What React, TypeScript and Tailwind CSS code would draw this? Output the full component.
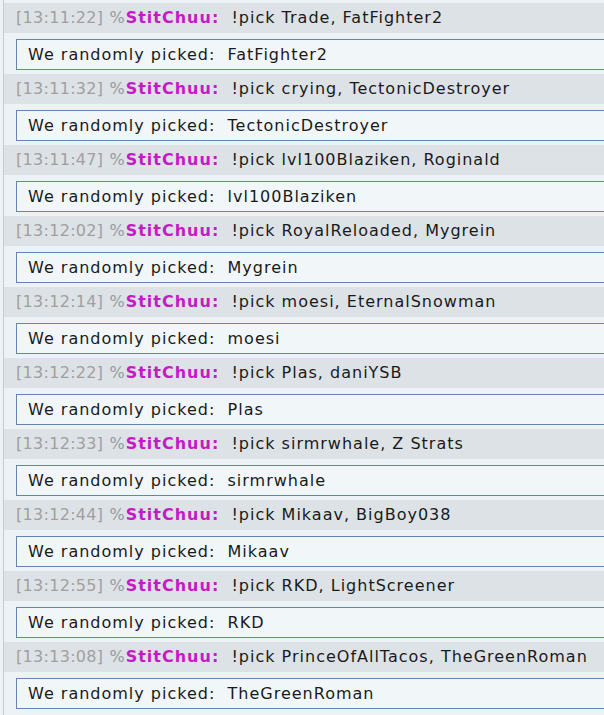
import React from "react";

const picks = [
  { time: "13:11:22", msg: "!pick Trade, FatFighter2", result: "FatFighter2" },
  { time: "13:11:32", msg: "!pick crying, TectonicDestroyer", result: "TectonicDestroyer" },
  { time: "13:11:47", msg: "!pick lvl100Blaziken, Roginald", result: "lvl100Blaziken" },
  { time: "13:12:02", msg: "!pick RoyalReloaded, Mygrein", result: "Mygrein" },
  { time: "13:12:14", msg: "!pick moesi, EternalSnowman", result: "moesi" },
  { time: "13:12:22", msg: "!pick Plas, daniYSB", result: "Plas" },
  { time: "13:12:33", msg: "!pick sirmrwhale, Z Strats", result: "sirmrwhale" },
  { time: "13:12:44", msg: "!pick Mikaav, BigBoy038", result: "Mikaav" },
  { time: "13:12:55", msg: "!pick RKD, LightScreener", result: "RKD" },
  { time: "13:13:08", msg: "!pick PrinceOfAllTacos, TheGreenRoman", result: "TheGreenRoman" },
];

export default function App() {
  return (
    <div className="w-[604px] h-[715px] overflow-hidden flex bg-[#edf2f6] font-['DejaVu_Sans',Verdana,sans-serif] text-[16px]">
      {/* left gutter */}
      <div className="w-[3px] shrink-0 bg-[#eef2f5]" />
      <div className="w-px shrink-0 bg-[#c5cace]" />
      <div className="flex-1 flex flex-col pt-[3px]">
        {picks.map((p) => (
          <div key={p.time} className="flex flex-col">
            {/* chat line */}
            <div className="h-[30px] bg-[#dde2e6] flex items-center pl-[12px] whitespace-pre leading-none tracking-[1px]">
              <span className="text-[#a0a0a0] tracking-[0.3px]">[{p.time}]</span>
              <span className="text-[#9a9a9a]"> %</span>
              <span className="font-bold text-[#c51bc5]">StitChuu:</span>
              <span className="text-[#1a1a1a]">  {p.msg}</span>
            </div>
            {/* bot reply */}
            <div className="mt-[6px] mb-[4px] ml-[12px] h-[31px] border border-r-0 border-[#6286af] bg-[#f1f6f9] flex items-center pl-[11px] whitespace-pre text-[#1a1a1a] leading-none tracking-[1px]">
              We randomly picked:  {p.result}
            </div>
          </div>
        ))}
      </div>
    </div>
  );
}
